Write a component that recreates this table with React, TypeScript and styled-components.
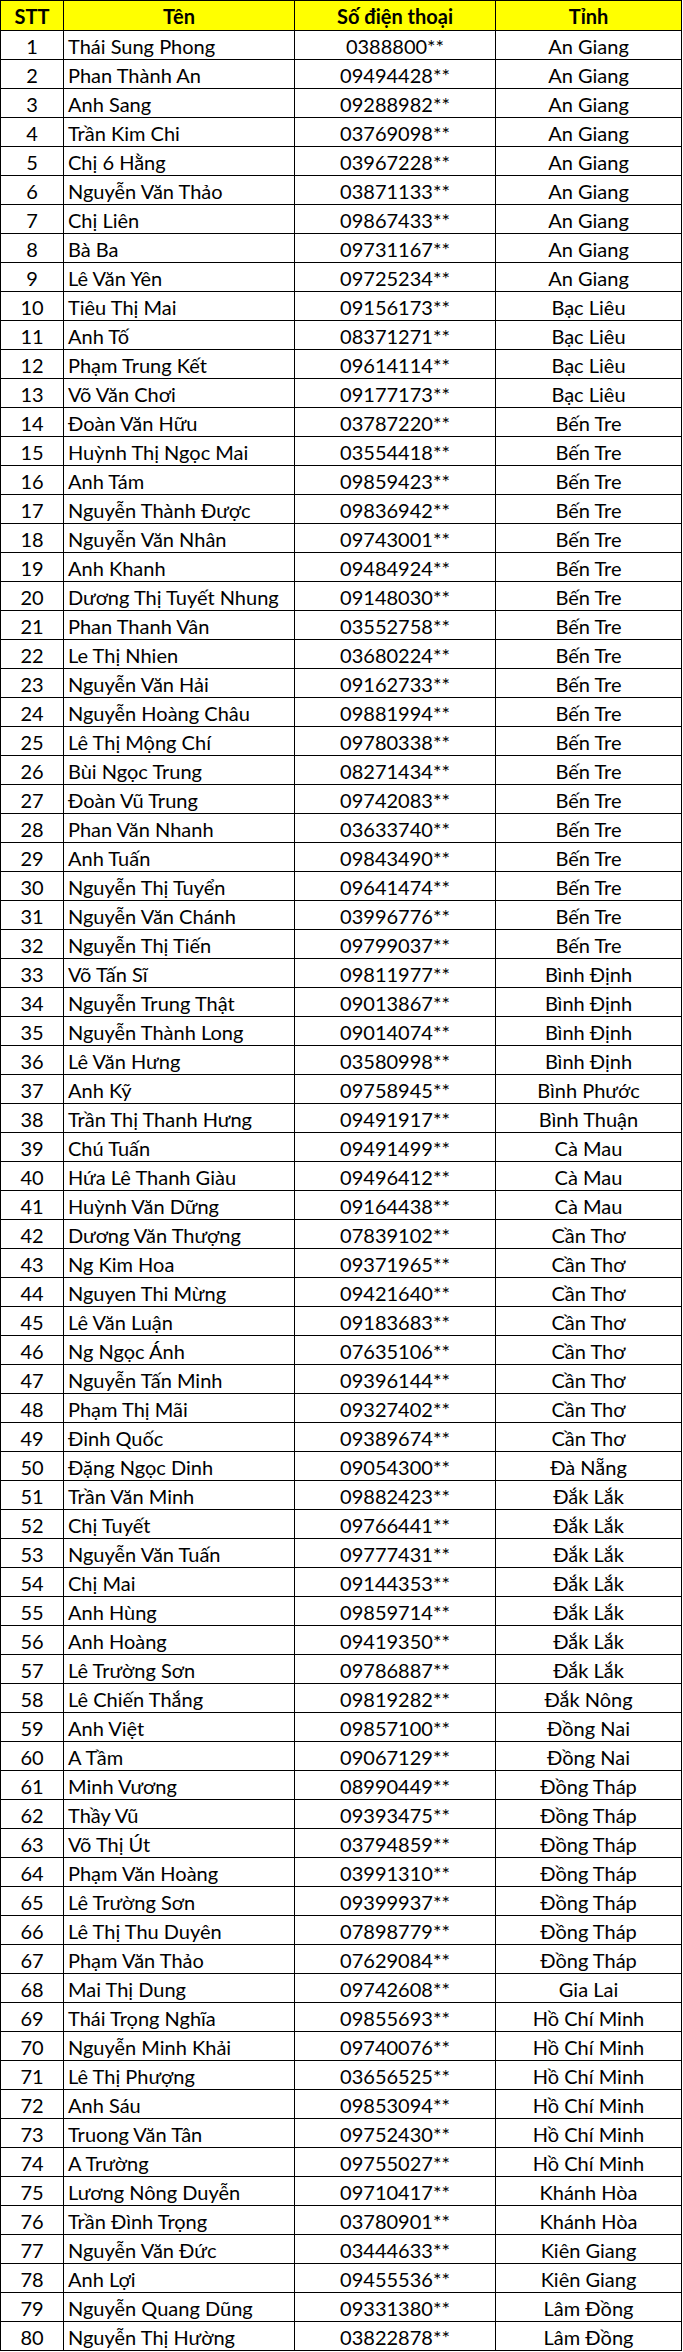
import React from 'react';
import styled, { createGlobalStyle } from 'styled-components';

const GlobalStyle = createGlobalStyle`
    html, body {
        margin: 0;
        padding: 0;
        background: #ffffff;
    }
    body {
        font-family: Lato, "Noto Sans", sans-serif;
        color: #000;
    }
`;

type Row = [string, string, string];

const rows: Row[] = [
    ['Thái Sung Phong', '0388800**', 'An Giang'],
    ['Phan Thành An', '09494428**', 'An Giang'],
    ['Anh Sang', '09288982**', 'An Giang'],
    ['Trần Kim Chi', '03769098**', 'An Giang'],
    ['Chị 6 Hằng', '03967228**', 'An Giang'],
    ['Nguyễn Văn Thảo', '03871133**', 'An Giang'],
    ['Chị Liên', '09867433**', 'An Giang'],
    ['Bà Ba', '09731167**', 'An Giang'],
    ['Lê Văn Yên', '09725234**', 'An Giang'],
    ['Tiêu Thị Mai', '09156173**', 'Bạc Liêu'],
    ['Anh Tố', '08371271**', 'Bạc Liêu'],
    ['Phạm Trung Kết', '09614114**', 'Bạc Liêu'],
    ['Võ Văn Chơi', '09177173**', 'Bạc Liêu'],
    ['Đoàn Văn Hữu', '03787220**', 'Bến Tre'],
    ['Huỳnh Thị Ngọc Mai', '03554418**', 'Bến Tre'],
    ['Anh Tám', '09859423**', 'Bến Tre'],
    ['Nguyễn Thành Được', '09836942**', 'Bến Tre'],
    ['Nguyễn Văn Nhân', '09743001**', 'Bến Tre'],
    ['Anh Khanh', '09484924**', 'Bến Tre'],
    ['Dương Thị Tuyết Nhung', '09148030**', 'Bến Tre'],
    ['Phan Thanh Vân', '03552758**', 'Bến Tre'],
    ['Le Thị Nhien', '03680224**', 'Bến Tre'],
    ['Nguyễn Văn Hải', '09162733**', 'Bến Tre'],
    ['Nguyễn Hoàng Châu', '09881994**', 'Bến Tre'],
    ['Lê Thị Mộng Chí', '09780338**', 'Bến Tre'],
    ['Bùi Ngọc Trung', '08271434**', 'Bến Tre'],
    ['Đoàn Vũ Trung', '09742083**', 'Bến Tre'],
    ['Phan Văn Nhanh', '03633740**', 'Bến Tre'],
    ['Anh Tuấn', '09843490**', 'Bến Tre'],
    ['Nguyễn Thị Tuyển', '09641474**', 'Bến Tre'],
    ['Nguyễn Văn Chánh', '03996776**', 'Bến Tre'],
    ['Nguyễn Thị Tiến', '09799037**', 'Bến Tre'],
    ['Võ Tấn Sĩ', '09811977**', 'Bình Định'],
    ['Nguyễn Trung Thật', '09013867**', 'Bình Định'],
    ['Nguyễn Thành Long', '09014074**', 'Bình Định'],
    ['Lê Văn Hưng', '03580998**', 'Bình Định'],
    ['Anh Kỹ', '09758945**', 'Bình Phước'],
    ['Trần Thị Thanh Hưng', '09491917**', 'Bình Thuận'],
    ['Chú Tuấn', '09491499**', 'Cà Mau'],
    ['Hứa Lê Thanh Giàu', '09496412**', 'Cà Mau'],
    ['Huỳnh Văn Dững', '09164438**', 'Cà Mau'],
    ['Dương Văn Thượng', '07839102**', 'Cần Thơ'],
    ['Ng Kim Hoa', '09371965**', 'Cần Thơ'],
    ['Nguyen Thi Mừng', '09421640**', 'Cần Thơ'],
    ['Lê Văn Luận', '09183683**', 'Cần Thơ'],
    ['Ng Ngọc Ánh', '07635106**', 'Cần Thơ'],
    ['Nguyễn Tấn Minh', '09396144**', 'Cần Thơ'],
    ['Phạm Thị Mãi', '09327402**', 'Cần Thơ'],
    ['Đinh Quốc', '09389674**', 'Cần Thơ'],
    ['Đặng Ngọc Dinh', '09054300**', 'Đà Nẵng'],
    ['Trần Văn Minh', '09882423**', 'Đắk Lắk'],
    ['Chị Tuyết', '09766441**', 'Đắk Lắk'],
    ['Nguyễn Văn Tuấn', '09777431**', 'Đắk Lắk'],
    ['Chị Mai', '09144353**', 'Đắk Lắk'],
    ['Anh Hùng', '09859714**', 'Đắk Lắk'],
    ['Anh Hoàng', '09419350**', 'Đắk Lắk'],
    ['Lê Trường Sơn', '09786887**', 'Đắk Lắk'],
    ['Lê Chiến Thắng', '09819282**', 'Đắk Nông'],
    ['Anh Việt', '09857100**', 'Đồng Nai'],
    ['A Tầm', '09067129**', 'Đồng Nai'],
    ['Minh Vương', '08990449**', 'Đồng Tháp'],
    ['Thầy Vũ', '09393475**', 'Đồng Tháp'],
    ['Võ Thị Út', '03794859**', 'Đồng Tháp'],
    ['Phạm Văn Hoàng', '03991310**', 'Đồng Tháp'],
    ['Lê Trường Sơn', '09399937**', 'Đồng Tháp'],
    ['Lê Thị Thu Duyên', '07898779**', 'Đồng Tháp'],
    ['Phạm Văn Thảo', '07629084**', 'Đồng Tháp'],
    ['Mai Thị Dung', '09742608**', 'Gia Lai'],
    ['Thái Trọng Nghĩa', '09855693**', 'Hồ Chí Minh'],
    ['Nguyễn Minh Khải', '09740076**', 'Hồ Chí Minh'],
    ['Lê Thị Phượng', '03656525**', 'Hồ Chí Minh'],
    ['Anh Sáu', '09853094**', 'Hồ Chí Minh'],
    ['Truong Văn Tân', '09752430**', 'Hồ Chí Minh'],
    ['A Trường', '09755027**', 'Hồ Chí Minh'],
    ['Lương Nông Duyễn', '09710417**', 'Khánh Hòa'],
    ['Trần Đình Trọng', '03780901**', 'Khánh Hòa'],
    ['Nguyễn Văn Đức', '03444633**', 'Kiên Giang'],
    ['Anh Lợi', '09455536**', 'Kiên Giang'],
    ['Nguyễn Quang Dũng', '09331380**', 'Lâm Đồng'],
    ['Nguyễn Thị Hường', '03822878**', 'Lâm Đồng'],
];

const Sheet = styled.div`
    display: grid;
    grid-template-columns: 63px 231px 201px 186px;
    width: 682px;
    border-top: 1px solid #000;
    border-left: 1px solid #000;
    box-sizing: border-box;
`;

const HeadCell = styled.div`
    box-sizing: border-box;
    height: 30px;
    padding-top: 2px;
    background-color: #ffff00;
    border-right: 1px solid #000;
    border-bottom: 1px solid #000;
    font-size: 20px;
    font-weight: 700;
    line-height: 26px;
    text-align: center;
    white-space: nowrap;
`;

const Cell = styled.div<{ $align?: 'left' | 'center' }>`
    box-sizing: border-box;
    height: 29px;
    padding: 2px ${props => (props.$align === 'left' ? '0 0 4px' : '0')};
    padding-left: ${props => (props.$align === 'left' ? '4px' : '0')};
    padding-right: 0;
    padding-bottom: 0;
    border-right: 1px solid #000;
    border-bottom: 1px solid #000;
    font-size: 20px;
    line-height: 26px;
    text-align: ${props => props.$align || 'center'};
    white-space: nowrap;
    overflow: hidden;
`;

const App: React.FC = () => {
    return (
        <>
            <GlobalStyle />
            <Sheet>
                <HeadCell>STT</HeadCell>
                <HeadCell>Tên</HeadCell>
                <HeadCell>Số điện thoại</HeadCell>
                <HeadCell>Tỉnh</HeadCell>
                {rows.map(([name, phone, province], i) => (
                    <React.Fragment key={i}>
                        <Cell>{i + 1}</Cell>
                        <Cell $align="left">{name}</Cell>
                        <Cell>{phone}</Cell>
                        <Cell>{province}</Cell>
                    </React.Fragment>
                ))}
            </Sheet>
        </>
    );
};

export default App;
